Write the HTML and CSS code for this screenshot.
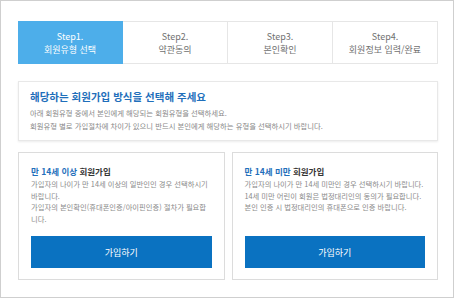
FILE: index.html
```html
<!DOCTYPE html>
<html lang="ko">
<head>
<meta charset="utf-8">
<link rel="stylesheet" href="styles.css">
</head>
<body>
<div class="frame">
  <ol class="steps">
    <li class="step active"><span>Step1.</span><span>회원유형 선택</span></li>
    <li class="step"><span>Step2.</span><span>약관동의</span></li>
    <li class="step"><span>Step3.</span><span>본인확인</span></li>
    <li class="step"><span>Step4.</span><span>회원정보 입력/완료</span></li>
  </ol>
  <section class="intro">
    <h2 class="intro-title">해당하는 회원가입 방식을 선택해 주세요</h2>
    <p class="intro-text">아래 회원유형 중에서 본인에게 해당되는 회원유형을 선택하세요.<br>회원유형 별로 가입절차에 차이가 있으니 반드시 본인에게 해당하는 유형을 선택하시기 바랍니다.</p>
  </section>
  <div class="cards">
    <div class="card">
      <h3 class="card-title"><em>만 14세 이상</em> 회원가입</h3>
      <p class="card-text">가입자의 나이가 만 14세 이상의 일반인인 경우 선택하시기 바랍니다.<br>가입자의 본인확인(휴대폰인증/아이핀인증) 절차가 필요합니다.</p>
      <a class="btn">가입하기</a>
    </div>
    <div class="card">
      <h3 class="card-title"><em>만 14세 미만</em> 회원가입</h3>
      <p class="card-text">가입자의 나이가 만 14세 미만인 경우 선택하시기 바랍니다.<br>14세 미만 어린이 회원은 법정대리인의 동의가 필요합니다.<br>본인 인증 시 법정대리인의 휴대폰으로 인증 바랍니다.</p>
      <a class="btn">가입하기</a>
    </div>
  </div>
</div>
</body>
</html>
```
FILE: styles.css
```css
html, body {
  margin: 0;
  padding: 0;
  background: #fff;
}
body {
  font-family: "Noto Sans CJK KR", "Noto Sans", sans-serif;
}
.frame {
  box-sizing: border-box;
  width: 454px;
  height: 298px;
  border: 1px solid #cfcfcf;
  padding: 20px 15px 0 17px;
}
.steps {
  list-style: none;
  margin: 0;
  padding: 0;
  display: flex;
  width: 420px;
  height: 43px;
}
.step {
  flex: 1;
  box-sizing: border-box;
  display: flex;
  flex-direction: column;
  align-items: center;
  justify-content: center;
  border: 1px solid #e6e6e6;
  border-left: none;
  color: #707070;
  font-size: 9px;
  line-height: 13px;
}
.step.active {
  background: #4daeea;
  border-color: #4daeea;
  color: #fff;
}
.intro {
  margin-top: 17px;
  width: 420px;
  box-sizing: border-box;
  height: 60px;
  border: 1px solid #e8e8e8;
  box-shadow: 0 1px 2px rgba(0,0,0,0.08);
  padding: 8px 11px 0;
}
.intro-title {
  margin: 0;
  font-size: 10.5px;
  line-height: 14px;
  font-weight: 700;
  color: #1f6fbb;
}
.intro-text {
  margin: 3px 0 0;
  font-size: 7.35px;
  line-height: 12.5px;
  color: #888;
}
.cards {
  margin-top: 11px;
  width: 420px;
  display: flex;
  gap: 7px;
}
.card {
  flex: 1;
  box-sizing: border-box;
  height: 128px;
  border: 1px solid #dcdcdc;
  padding: 12px 12px 11px;
  display: flex;
  flex-direction: column;
}
.card-title {
  margin: 0;
  font-size: 8.5px;
  line-height: 12px;
  font-weight: 700;
  color: #333;
}
.card-title em {
  font-style: normal;
  color: #1f6fbb;
}
.card-text {
  margin: 2px 0 0;
  font-size: 7.3px;
  line-height: 11.5px;
  color: #8a8a8a;
}
.btn {
  margin-top: auto;
  height: 32px;
  display: flex;
  align-items: center;
  justify-content: center;
  background: #0a72c1;
  color: #fff;
  font-size: 9px;
}
```
